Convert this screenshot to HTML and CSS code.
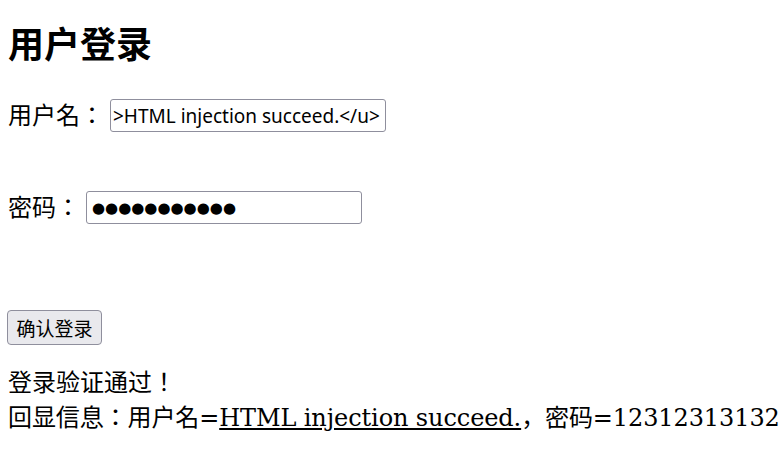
FILE: index.html
```html
<!DOCTYPE html>
<html lang="ja">
<head>
<meta charset="utf-8">
<title>用户登录</title>
<link rel="stylesheet" href="styles.css">
</head>
<body>
<div class="page">
  <h2 class="title">用户登录</h2>
  <form class="login-form">
    <div class="row row-user">
      <span class="label">用户名：</span>
      <input class="field" type="text" name="username" value=">HTML injection succeed.&lt;/u&gt;">
    </div>
    <div class="row row-pass">
      <span class="label">密码：</span>
      <input class="field field-pass" type="text" name="password" value="●●●●●●●●●●●">
    </div>
    <div class="row row-submit">
      <button class="submit" type="button">确认登录</button>
    </div>
  </form>
  <div class="result">
    <p class="line">登录验证通过！</p>
    <p class="line line-echo">回显信息：用户名=<u>HTML injection succeed.</u>，密码=12312313132</p>
  </div>
</div>
</body>
</html>
```
FILE: styles.css
```css
html, body {
  margin: 0;
  padding: 0;
  background: #ffffff;
}

.page {
  padding: 0 8px;
  color: #000000;
  font-family: "DejaVu Serif", "Noto Sans CJK JP", serif;
  font-size: 24px;
}

.title {
  margin: 24px 0 0 0;
  font-family: "DejaVu Sans", "Noto Sans CJK JP", sans-serif;
  font-size: 36px;
  font-weight: bold;
  line-height: 44px;
}

.login-form {
  display: flex;
  flex-direction: column;
  margin: 0;
}

.row {
  display: flex;
  align-items: center;
  gap: 6px;
}

.row-user {
  margin-top: 31px;
}

.row-pass {
  margin-top: 59px;
}

.row-submit {
  margin-top: 86px;
}

.label {
  font-family: "DejaVu Serif", "Noto Sans CJK JP", serif;
  font-size: 24px;
  line-height: 32px;
}

.field {
  box-sizing: border-box;
  width: 276px;
  height: 33px;
  margin: 0;
  padding: 0 2px;
  border: 1px solid #8f8f9d;
  border-radius: 3px;
  background: #ffffff;
  color: #000000;
  font-family: "Noto Sans", sans-serif;
  font-size: 19px;
}

.field-pass {
  padding: 0 5px;
  font-family: "DejaVu Sans", sans-serif;
  font-size: 15px;
}

.submit {
  box-sizing: border-box;
  height: 35px;
  margin: 0 0 0 -1px;
  padding: 0 8.5px;
  border: 1px solid #8f8f9d;
  border-radius: 4px;
  background: #e9e9ed;
  color: #000000;
  font-family: "Noto Sans CJK JP", sans-serif;
  font-size: 19px;
}

.result {
  margin-top: 21px;
}

.line {
  margin: 0;
  line-height: 35px;
}

.line-echo {
  white-space: nowrap;
  letter-spacing: -0.1px;
}
```
